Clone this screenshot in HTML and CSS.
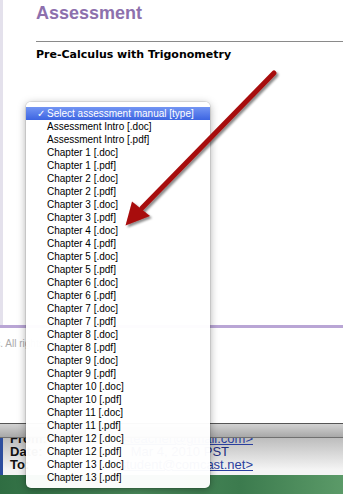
FILE: index.html
```html
<!DOCTYPE html>
<html lang="en">
<head>
    <meta charset="UTF-8">
    <meta name="viewport" content="width=device-width, initial-scale=1.0">
    <title>Assessment</title>
    <link rel="stylesheet" href="styles.css">
</head>
<body>
    <div class="page">
        <div class="main">
            <h1>Assessment</h1>
            <hr class="rule">
            <h2>Pre-Calculus with Trigonometry</h2>
        </div>
        <div class="footer">
            <p>Inc. All rights reserved.</p>
        </div>
    </div>

    <div class="toolbar"></div>

    <div class="mail">
        <div class="headers">
            <div class="hdr"><b>From:</b><a href="#">&lt;teacher@gmail.com&gt;</a></div>
            <div class="hdr date"><b>Date:</b><span>Mar 4, 2010 PST</span></div>
            <div class="hdr"><b>To:</b><a href="#">&lt;student@comcast.net&gt;</a></div>
        </div>
    </div>

    <div class="desktop"></div>

    <ul class="menu">
        <li class="selected"><span class="check">✓</span>Select assessment manual [type]</li>
        <li>Assessment Intro [.doc]</li>
        <li>Assessment Intro [.pdf]</li>
        <li>Chapter 1 [.doc]</li>
        <li>Chapter 1 [.pdf]</li>
        <li>Chapter 2 [.doc]</li>
        <li>Chapter 2 [.pdf]</li>
        <li>Chapter 3 [.doc]</li>
        <li>Chapter 3 [.pdf]</li>
        <li>Chapter 4 [.doc]</li>
        <li>Chapter 4 [.pdf]</li>
        <li>Chapter 5 [.doc]</li>
        <li>Chapter 5 [.pdf]</li>
        <li>Chapter 6 [.doc]</li>
        <li>Chapter 6 [.pdf]</li>
        <li>Chapter 7 [.doc]</li>
        <li>Chapter 7 [.pdf]</li>
        <li>Chapter 8 [.doc]</li>
        <li>Chapter 8 [.pdf]</li>
        <li>Chapter 9 [.doc]</li>
        <li>Chapter 9 [.pdf]</li>
        <li>Chapter 10 [.doc]</li>
        <li>Chapter 10 [.pdf]</li>
        <li>Chapter 11 [.doc]</li>
        <li>Chapter 11 [.pdf]</li>
        <li>Chapter 12 [.doc]</li>
        <li>Chapter 12 [.pdf]</li>
        <li>Chapter 13 [.doc]</li>
        <li>Chapter 13 [.pdf]</li>
    </ul>

    <!-- callout arrow -->
    <svg class="arrow" width="343" height="494" viewBox="0 0 343 494">
        <defs>
            <filter id="shadow" x="-20%" y="-20%" width="140%" height="140%">
                <feDropShadow dx="2" dy="2" stdDeviation="1.2" flood-color="#000" flood-opacity="0.45"/>
            </filter>
            <linearGradient id="red" x1="0" y1="0" x2="1" y2="1">
                <stop offset="0" stop-color="#c01414"/>
                <stop offset="1" stop-color="#8e0404"/>
            </linearGradient>
        </defs>
        <g filter="url(#shadow)">
            <line x1="274" y1="73" x2="142" y2="208" stroke="url(#red)" stroke-width="5" stroke-linecap="round"/>
            <polygon points="125.5,225.5 132,201.5 150,216" fill="#a80a0a"/>
        </g>
    </svg>
</body>
</html>
```

FILE: styles.css
```css
body {
    margin: 0;
    width: 343px;
    height: 494px;
    overflow: hidden;
    position: relative;
    font-family: "Liberation Sans", Arial, sans-serif;
    background: #fff;
}
.page {
    height: 423px;
    display: flex;
    flex-direction: column;
}
.main {
    flex: 1;
    border-left: 3px solid #e4e1ec;
    padding: 3px 0 0 33px;
}
.main h1 {
    margin: 0;
    font-size: 18px;
    line-height: 21px;
    font-weight: bold;
    color: #8d70ad;
}
.rule {
    border: 0;
    border-top: 1px solid #8a8a8a;
    margin: 17px 0 0;
}
.main h2 {
    margin: 6px 0 0;
    font-family: "DejaVu Sans", sans-serif;
    font-size: 11px;
    line-height: 13px;
    font-weight: bold;
    color: #000;
}
.footer {
    height: 98px;
    box-sizing: border-box;
    border-top: 3px solid #b9a5d5;
    padding-top: 10px;
}
.footer p {
    margin: 0 0 0 -13px;
    font-size: 10px;
    line-height: 12px;
    color: #a9a9a9;
}
.toolbar {
    height: 13px;
    border-top: 1px solid #555;
    border-bottom: 1px solid #707070;
    background: linear-gradient(#d2d2d2, #a8a8a8);
}
.mail {
    height: 37px;
    overflow: hidden;
    border-left: 3px solid #2c4d9e;
    background: linear-gradient(#bdbdbd, #f4f4f4 85%);
}
.headers {
    margin-top: -6px;
    padding-left: 7px;
}
.hdr {
    display: flex;
    justify-content: space-between;
    align-items: baseline;
    width: 243px;
    height: 13px;
    line-height: 13px;
    font-size: 13px;
    white-space: nowrap;
}
.hdr b {
    color: #111;
}
.hdr a {
    color: #2a3f9e;
}
.hdr span {
    color: #1f2f7e;
}
.hdr.date {
    width: 219px;
}
.desktop {
    height: 19px;
    background: linear-gradient(90deg, #2f6d42, #4b8c5c 40%, #3c7b4e 70%, #5b9a68);
}
.menu {
    position: absolute;
    left: 26px;
    top: 102px;
    width: 184px;
    height: 386px;
    box-sizing: border-box;
    margin: 0;
    padding: 5px 0 4px;
    list-style: none;
    background: rgba(255, 255, 255, 0.97);
    border-radius: 5px;
    box-shadow: 0 2px 8px rgba(0, 0, 0, 0.35), 0 0 0 1px rgba(0, 0, 0, 0.08);
    font-size: 10px;
    color: #000;
}
.menu li {
    height: 13px;
    line-height: 13px;
    padding-left: 21px;
    white-space: nowrap;
}
.menu li.selected {
    background: linear-gradient(#7395f3, #3d65e2);
    color: #fff;
}
.check {
    display: inline-block;
    width: 15px;
    margin-left: -15px;
    text-indent: 5px;
}
.arrow {
    position: absolute;
    left: 0;
    top: 0;
    pointer-events: none;
}
```
